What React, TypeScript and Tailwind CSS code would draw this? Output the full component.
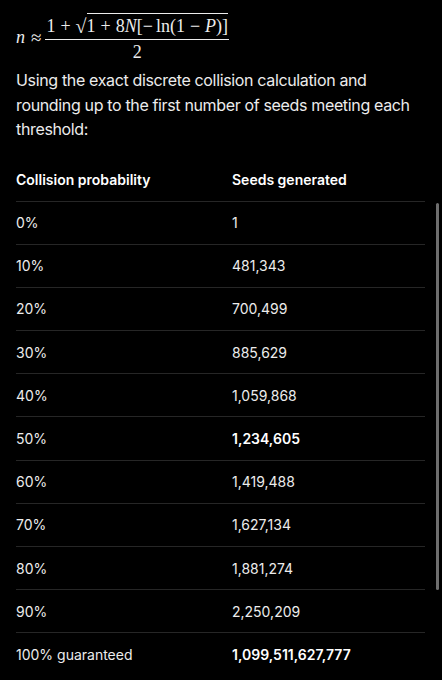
const rows: { p: string; n: string; bold?: boolean }[] = [
  { p: "0%", n: "1" },
  { p: "10%", n: "481,343" },
  { p: "20%", n: "700,499" },
  { p: "30%", n: "885,629" },
  { p: "40%", n: "1,059,868" },
  { p: "50%", n: "1,234,605", bold: true },
  { p: "60%", n: "1,419,488" },
  { p: "70%", n: "1,627,134" },
  { p: "80%", n: "1,881,274" },
  { p: "90%", n: "2,250,209" },
  { p: "100% guaranteed", n: "1,099,511,627,777", bold: true },
];

function Formula() {
  return (
    <div className="flex items-center pl-[16px] pt-[13px] text-[18px] leading-none text-[#ececec] font-['Liberation_Serif','DejaVu_Serif',serif]">
      <span className="italic">n</span>
      <span className="ml-[6px] mr-[4px] text-[19px]">≈</span>
      <span className="inline-flex flex-col items-center">
        <span className="flex items-end px-[1px] pb-[4px]">
          <span>1</span>
          <span className="mx-[5px]">+</span>
          <span className="text-[20px] leading-none relative top-[1px]">√</span>
          <span className="border-t border-[#ececec] pt-[3px]">
            1<span className="mx-[5px]">+</span>8<span className="italic">N</span>[−<span className="ml-[3px]">ln(1</span>
            <span className="mx-[5px]">−</span>
            <span className="italic">P</span>)]
          </span>
        </span>
        <span className="w-full border-t border-[#ececec] pt-[3px] text-center">2</span>
      </span>
    </div>
  );
}

export default function App() {
  return (
    <div className="relative min-h-[680px] w-[442px] overflow-hidden bg-black text-[#ececec] font-['Inter','Liberation_Sans',sans-serif]">
      <Formula />
      <p className="mt-[7px] px-[16px] text-[16px] leading-[24.5px] tracking-[-0.35px]">
        Using the exact discrete collision calculation and rounding up to the first number of seeds meeting each threshold:
      </p>
      <div className="mt-[17px] ml-[16px] w-[409px] text-[14px]">
        <div className="flex h-[43px] items-center border-b border-[#262626] font-semibold text-white">
          <div className="w-[216px]">Collision probability</div>
          <div>Seeds generated</div>
        </div>
        {rows.map((r, i) => (
          <div
            key={r.p}
            className={
              i < rows.length - 1
                ? "flex h-[43.2px] items-center border-b border-[#262626]"
                : "flex h-[43.2px] items-center"
            }
          >
            <div className="w-[216px]">{r.p}</div>
            <div className={r.bold ? "font-semibold text-white" : ""}>{r.n}</div>
          </div>
        ))}
      </div>
      <div className="absolute left-[436px] top-[203px] h-[387px] w-[3px] rounded-full bg-[#6e6e6e]" />
    </div>
  );
}
